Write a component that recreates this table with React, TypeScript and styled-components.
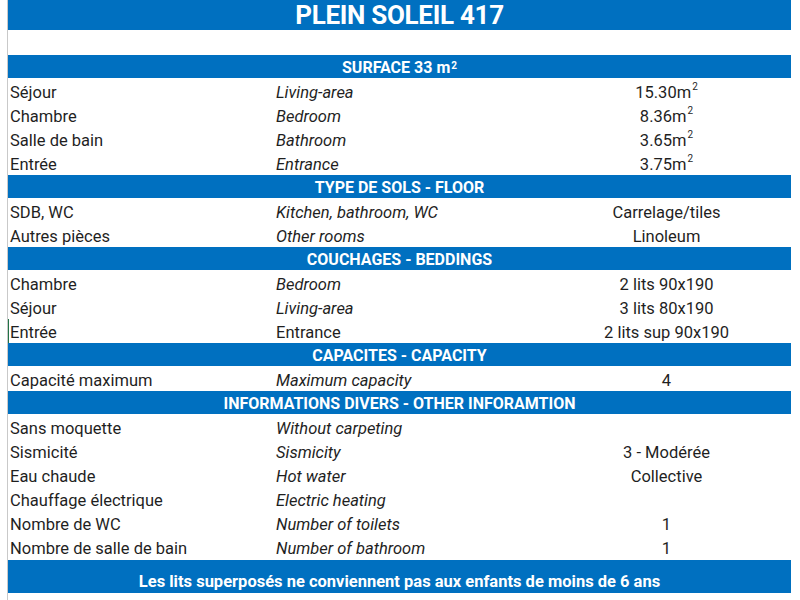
import React from "react";
import styled, { createGlobalStyle } from "styled-components";

const Global = createGlobalStyle`
  html, body { margin: 0; padding: 0; background: #ffffff; }
  body { font-family: Roboto, "Open Sans", Arial, sans-serif; color: #1f1f1f; }
`;

const BLUE = "#0070c0";

const Page = styled.div`
  padding-left: 7px;
  width: 800px;
  height: 600px;
  box-sizing: border-box;
  overflow: hidden;
`;

const Sheet = styled.div`
  width: 783px;
  height: 600px;
  border-left: 1px solid #c9c9c9;
  display: flex;
  flex-direction: column;
`;

const Title = styled.div`
  height: 30px;
  background: ${BLUE};
  color: #fff;
  font-family: Roboto, Arial, sans-serif;
  font-weight: 700;
  font-size: 26px;
  letter-spacing: -0.3px;
  display: flex;
  align-items: center;
  justify-content: center;
  padding-bottom: 1px;
  box-sizing: border-box;
`;

const Spacer = styled.div`
  height: 25px;
`;

const SectionHeader = styled.div`
  height: 24px;
  background: ${BLUE};
  color: #fff;
  font-weight: 700;
  font-size: 16px;
  display: flex;
  align-items: center;
  justify-content: center;
  padding-top: 1px;
  box-sizing: border-box;
  border-bottom: 1px solid #ffffff;
`;

const Row = styled.div<{ $marked?: boolean }>`
  height: 24px;
  display: grid;
  grid-template-columns: 264px 270px 1fr;
  align-items: center;
  font-size: 16.5px;
  padding-top: 2px;
  box-sizing: border-box;
  box-shadow: ${(p) => (p.$marked ? "inset 1px 0 0 #217346" : "none")};
`;

const Cell = styled.div<{ $italic?: boolean; $center?: boolean }>`
  padding-left: ${(p) => (p.$center ? "0" : "2px")};
  font-style: ${(p) => (p.$italic ? "italic" : "normal")};
  text-align: ${(p) => (p.$center ? "center" : "left")};
  white-space: nowrap;
`;

const EnCell = styled(Cell)`
  padding-left: 4px;
`;

const Sup = styled.sup`
  font-size: 10px;
  line-height: 0;
  position: relative;
  top: -1px;
  margin-left: 1px;
`;

const Footer = styled.div`
  height: 34px;
  background: ${BLUE};
  color: #fff;
  font-weight: 700;
  font-size: 16.5px;
  display: flex;
  align-items: flex-end;
  justify-content: center;
  padding-bottom: 2px;
  box-sizing: border-box;
  border-top: 1px solid #ffffff;
`;

type R = { fr: string; en: string; v?: React.ReactNode; italic?: boolean; marked?: boolean };

const m2 = (n: string) => (
  <>
    {n}m<Sup>2</Sup>
  </>
);

const sections: { title: React.ReactNode; rows: R[] }[] = [
  {
    title: (
      <>
        SURFACE 33 m<Sup>2</Sup>
      </>
    ),
    rows: [
      { fr: "Séjour", en: "Living-area", v: m2("15.30") },
      { fr: "Chambre", en: "Bedroom", v: m2("8.36") },
      { fr: "Salle de bain", en: "Bathroom", v: m2("3.65") },
      { fr: "Entrée", en: "Entrance", v: m2("3.75") },
    ],
  },
  {
    title: "TYPE DE SOLS - FLOOR",
    rows: [
      { fr: "SDB, WC", en: "Kitchen, bathroom, WC", v: "Carrelage/tiles" },
      { fr: "Autres pièces", en: "Other rooms", v: "Linoleum" },
    ],
  },
  {
    title: "COUCHAGES - BEDDINGS",
    rows: [
      { fr: "Chambre", en: "Bedroom", v: "2 lits 90x190" },
      { fr: "Séjour", en: "Living-area", v: "3 lits 80x190" },
      { fr: "Entrée", en: "Entrance", v: "2 lits sup 90x190", italic: false, marked: true },
    ],
  },
  {
    title: "CAPACITES - CAPACITY",
    rows: [{ fr: "Capacité maximum", en: "Maximum capacity", v: "4" }],
  },
  {
    title: "INFORMATIONS DIVERS - OTHER INFORAMTION",
    rows: [
      { fr: "Sans moquette", en: "Without carpeting" },
      { fr: "Sismicité", en: "Sismicity", v: "3 - Modérée" },
      { fr: "Eau chaude", en: "Hot water", v: "Collective" },
      { fr: "Chauffage électrique", en: "Electric heating" },
      { fr: "Nombre de WC", en: "Number of toilets", v: "1" },
      { fr: "Nombre de salle de bain", en: "Number of bathroom", v: "1" },
    ],
  },
];

export default function App() {
  return (
    <Page>
      <Global />
      <Sheet>
        <Title>PLEIN SOLEIL 417</Title>
        <Spacer />
        {sections.map((s, i) => (
          <React.Fragment key={i}>
            <SectionHeader>{s.title}</SectionHeader>
            {s.rows.map((r, j) => (
              <Row key={j} $marked={r.marked}>
                <Cell>{r.fr}</Cell>
                <EnCell $italic={r.italic !== false}>{r.en}</EnCell>
                <Cell $center>{r.v}</Cell>
              </Row>
            ))}
          </React.Fragment>
        ))}
        <Footer>Les lits superposés ne conviennent pas aux enfants de moins de 6 ans</Footer>
      </Sheet>
    </Page>
  );
}
